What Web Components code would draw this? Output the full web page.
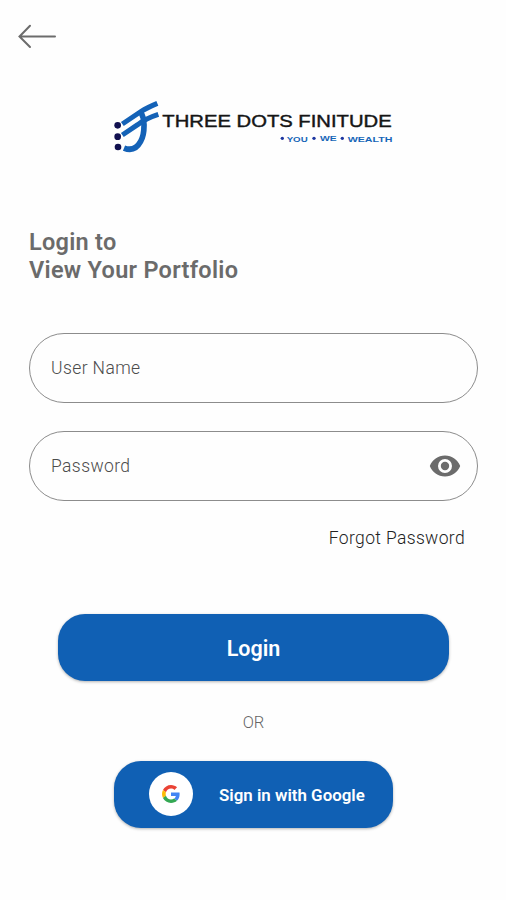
<!DOCTYPE html>
<html lang="en">
<head>
<meta charset="UTF-8">
<meta name="viewport" content="width=device-width, initial-scale=1.0">
<title>Three Dots Finitude</title>
<style>
    body {
        margin: 0;
        background: #fefefe;
        font-family: Roboto, "Liberation Sans", sans-serif;
    }
</style>
</head>
<body>
<login-page></login-page>

<script>
class BackButton extends HTMLElement {
    constructor() {
        super();
        this.attachShadow({ mode: 'open' });
        this.shadowRoot.innerHTML = `
            <style>
                :host { display: block; height: 28px; }
                svg { display: block; }
            </style>
            <svg width="42" height="28" viewBox="0 0 42 28" fill="none" stroke="#6c6c6c" stroke-width="2" stroke-linecap="round">
                <path d="M39 14.5H4M14 3.8L3.5 14.5L14 25"/>
            </svg>
        `;
    }
}

class BrandLogo extends HTMLElement {
    constructor() {
        super();
        this.attachShadow({ mode: 'open' });
        this.shadowRoot.innerHTML = `
            <style>
                :host { display: block; height: 56px; }
                svg { display: block; }
                text { font-family: "Liberation Sans", Arial, sans-serif; }
                .name { font-size: 50px; fill: #151515; stroke: #151515; stroke-width: 1.2px; }
                .tag { font-size: 24px; font-weight: bold; fill: #1766b8; }
            </style>
            <svg width="290" height="56" viewBox="9 24 870 168">
                <g fill="#11104f">
                    <circle cx="38" cy="106" r="10"/>
                    <circle cx="38" cy="140" r="10"/>
                    <circle cx="39" cy="171" r="10"/>
                </g>
                <g fill="none" stroke="#1462b7" stroke-width="15">
                    <path d="M52 102L110 63Q124 54 157 40"/>
                    <path d="M52 135L98 104Q123 85 160 73"/>
                    <path d="M108 66Q118 86 117 108Q117 137 107 154Q89 187 57 174" stroke-width="17"/>
                </g>
                <text class="name" x="172" y="110" textLength="688" lengthAdjust="spacingAndGlyphs">THREE DOTS FINITUDE</text>
                <g fill="#1b35a0">
                    <circle cx="532" cy="145" r="5"/>
                    <circle cx="627" cy="145" r="5"/>
                    <circle cx="712" cy="145" r="5"/>
                </g>
                <text class="tag" x="545" y="155" textLength="63" lengthAdjust="spacingAndGlyphs">YOU</text>
                <text class="tag" x="645" y="154" textLength="50" lengthAdjust="spacingAndGlyphs">WE</text>
                <text class="tag" x="728" y="155" textLength="134" lengthAdjust="spacingAndGlyphs">WEALTH</text>
            </svg>
        `;
    }
}

class TextField extends HTMLElement {
    constructor() {
        super();
        this.attachShadow({ mode: 'open' });
        this.shadowRoot.innerHTML = `
            <style>
                :host {
                    display: flex;
                    align-items: center;
                    justify-content: space-between;
                    box-sizing: border-box;
                    height: 70px;
                    padding: 0 16px 0 21px;
                    border: 1px solid #8c8c8c;
                    border-radius: 35px;
                    color: #4c4c4c;
                    font-size: 17.5px;
                    font-weight: 300;
                    letter-spacing: 0.4px;
                }
            </style>
            <span><slot></slot></span>
            <slot name="icon"></slot>
        `;
    }
}

class EyeIcon extends HTMLElement {
    constructor() {
        super();
        this.attachShadow({ mode: 'open' });
        this.shadowRoot.innerHTML = `
            <style>
                :host { display: block; }
                svg { display: block; }
            </style>
            <svg width="32" height="24" viewBox="0 0 32 24">
                <path fill="#6b6b6b" fill-rule="evenodd" d="M16 1.5C9 1.5 3.2 5.8 0.8 12C3.2 18.2 9 22.5 16 22.5S28.8 18.2 31.2 12C28.8 5.8 23 1.5 16 1.5ZM16 19A7 7 0 1 1 16 5A7 7 0 0 1 16 19ZM16 7.8A4.2 4.2 0 1 0 16 16.2A4.2 4.2 0 0 0 16 7.8Z"/>
            </svg>
        `;
    }
}

class GoogleBadge extends HTMLElement {
    constructor() {
        super();
        this.attachShadow({ mode: 'open' });
        this.shadowRoot.innerHTML = `
            <style>
                :host {
                    display: flex;
                    align-items: center;
                    justify-content: center;
                    width: 44px;
                    height: 44px;
                    border-radius: 50%;
                    background: #fff;
                }
            </style>
            <svg width="18" height="18" viewBox="0 0 48 48">
                <path fill="#ea4335" d="M24 9.5c3.54 0 6.71 1.22 9.21 3.6l6.85-6.85C35.9 2.38 30.47 0 24 0 14.62 0 6.51 5.38 2.56 13.22l7.98 6.19C12.43 13.72 17.74 9.5 24 9.5z"/>
                <path fill="#4285f4" d="M46.98 24.55c0-1.57-.15-3.09-.38-4.55H24v9.02h12.94c-.58 2.96-2.26 5.48-4.78 7.18l7.73 6c4.51-4.18 7.09-10.36 7.09-17.65z"/>
                <path fill="#fbbc05" d="M10.53 28.59c-.48-1.45-.76-2.99-.76-4.59s.27-3.14.76-4.59l-7.98-6.19C.92 16.46 0 20.12 0 24s.92 7.54 2.56 10.78l7.97-6.19z"/>
                <path fill="#34a853" d="M24 48c6.48 0 11.93-2.13 15.89-5.81l-7.73-6c-2.15 1.45-4.92 2.3-8.16 2.3-6.26 0-11.57-4.22-13.47-9.91l-7.98 6.19C6.51 42.62 14.62 48 24 48z"/>
            </svg>
        `;
    }
}

class PillButton extends HTMLElement {
    constructor() {
        super();
        this.attachShadow({ mode: 'open' });
        this.shadowRoot.innerHTML = `
            <style>
                :host {
                    display: flex;
                    align-items: center;
                    justify-content: center;
                    box-sizing: border-box;
                    height: 67px;
                    border-radius: 27px;
                    background: #1060b4;
                    box-shadow: 0 1px 3px rgba(0, 0, 0, 0.3);
                    color: #fff;
                    font-weight: 600;
                }
                span { padding-top: 2px; }
            </style>
            <slot name="icon"></slot>
            <span><slot></slot></span>
        `;
    }
}

class LoginPage extends HTMLElement {
    constructor() {
        super();
        this.attachShadow({ mode: 'open' });
        this.shadowRoot.innerHTML = `
            <style>
                :host {
                    display: flex;
                    flex-direction: column;
                    box-sizing: border-box;
                    width: 506px;
                    height: 900px;
                    padding: 22px 28px 0 29px;
                }
                back-button { margin-left: -13px; }
                brand-logo { margin: 48px 0 0 79px; }
                h1 {
                    margin: 74px 0 0;
                    color: #6b6b6b;
                    font-size: 23.5px;
                    font-weight: 600;
                    letter-spacing: 0.28px;
                    line-height: 28px;
                }
                .fields {
                    display: flex;
                    flex-direction: column;
                    gap: 28px;
                    margin-top: 49px;
                }
                .forgot {
                    margin: 26px 13px 0 0;
                    color: #222;
                    font-size: 17.5px;
                    font-weight: 300;
                    letter-spacing: 0.35px;
                    line-height: 22px;
                    text-align: right;
                }
                .login {
                    margin: 65px 29px 0;
                    font-size: 21.5px;
                }
                .or {
                    margin-top: 32px;
                    color: #666;
                    font-size: 16.5px;
                    font-weight: 300;
                    line-height: 20px;
                    text-align: center;
                }
                .google {
                    justify-content: flex-start;
                    width: 279px;
                    margin: 28px 0 0 85px;
                    padding: 0 0 2px 35px;
                    font-size: 16.9px;
                }
                google-badge { margin-right: 26px; }
            </style>
            <back-button></back-button>
            <brand-logo></brand-logo>
            <h1>Login to<br>View Your Portfolio</h1>
            <div class="fields">
                <text-field>User Name</text-field>
                <text-field>Password<eye-icon slot="icon"></eye-icon></text-field>
            </div>
            <div class="forgot">Forgot Password</div>
            <pill-button class="login">Login</pill-button>
            <div class="or">OR</div>
            <pill-button class="google"><google-badge slot="icon"></google-badge>Sign in with Google</pill-button>
        `;
    }
}

customElements.define('back-button', BackButton);
customElements.define('brand-logo', BrandLogo);
customElements.define('text-field', TextField);
customElements.define('eye-icon', EyeIcon);
customElements.define('google-badge', GoogleBadge);
customElements.define('pill-button', PillButton);
customElements.define('login-page', LoginPage);
</script>
</body>
</html>
